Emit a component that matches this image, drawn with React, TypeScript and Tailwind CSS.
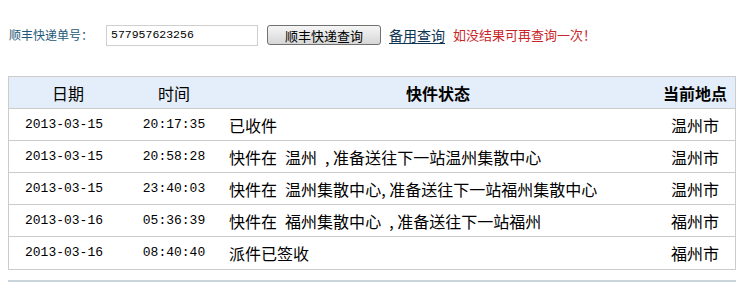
const rows = [
  { date: "2013-03-15", time: "20:17:35", status: "已收件", place: "温州市" },
  { date: "2013-03-15", time: "20:58:28", status: "快件在 温州 ,准备送往下一站温州集散中心", place: "温州市" },
  { date: "2013-03-15", time: "23:40:03", status: "快件在 温州集散中心,准备送往下一站福州集散中心", place: "温州市" },
  { date: "2013-03-16", time: "05:36:39", status: "快件在 福州集散中心 ,准备送往下一站福州", place: "福州市" },
  { date: "2013-03-16", time: "08:40:40", status: "派件已签收", place: "福州市" },
];

const cjk = "font-['Noto_Sans_CJK_SC',sans-serif]";
const mono = "font-['Liberation_Mono','Noto_Sans_CJK_SC',monospace]";

// half-width cells for space and comma, like the old bitmap font
function Status({ text }: { text: string }) {
  return (
    <>
      {text.split("").map((ch, i) =>
        ch === " " || ch === "," ? (
          <span key={i} className="inline-block w-[8px]">
            {ch === "," ? "," : "\u00a0"}
          </span>
        ) : (
          <span key={i}>{ch}</span>
        ),
      )}
    </>
  );
}

export default function App() {
  return (
    <div className={`w-[752px] h-[282px] overflow-hidden bg-white text-black ${cjk}`}>
      <div className="flex items-center h-[22px] mt-[24px] pl-[9px]">
        <span className="text-[12px] text-[#1f5878] w-[97px]">顺丰快递单号：</span>
        <div className={`h-[21px] w-[152px] border border-[#cfcfcf] flex items-center pl-[4px] text-[11.5px] ${mono}`}>
          577957623256
        </div>
        <button
          type="button"
          className="ml-[9px] h-[20px] w-[114px] rounded-[3px] border border-[#707070] bg-gradient-to-b from-[#f6f6f6] to-[#d6d6d6] text-[13px] leading-none flex items-center justify-center"
        >
          顺丰快递查询
        </button>
        <a className="ml-[8px] text-[14px] text-[#0d3553] underline underline-offset-2">备用查询</a>
        <span className="ml-[8px] text-[13px] text-[#c8262b]">如没结果可再查询一次！</span>
      </div>

      <div className="mt-[30px] ml-[8px] w-[728px] border border-[#cccccc]">
        <div className="flex h-[32px] bg-[#e4eefa] border-b border-[#cccccc] text-[16px] items-center">
          <div className="w-[110px] text-center pl-[8px]">日期</div>
          <div className="w-[110px] text-center">时间</div>
          <div className="flex-1 text-center font-bold pr-[8px]">快件状态</div>
          <div className="w-[80px] text-center font-bold">当前地点</div>
        </div>
        {rows.map((r, i) => (
          <div
            key={i}
            className={`flex h-[32px] items-center text-[16px] ${i < rows.length - 1 ? "border-b border-[#cccccc]" : ""}`}
          >
            <div className={`w-[110px] text-center text-[13px] ${mono}`}>{r.date}</div>
            <div className={`w-[110px] text-center text-[13px] ${mono}`}>{r.time}</div>
            <div className="flex-1 whitespace-nowrap">
              <Status text={r.status} />
            </div>
            <div className="w-[80px] text-center">{r.place}</div>
          </div>
        ))}
      </div>

      <div className="mt-[10px] ml-[8px] w-[728px] border-t-2 border-[#c9d4db]" />
    </div>
  );
}
